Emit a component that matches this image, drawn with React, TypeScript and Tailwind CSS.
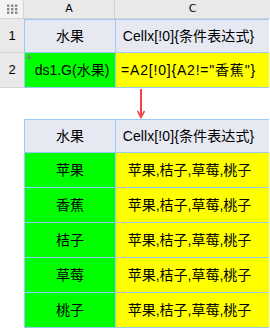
import React from "react"

const font = { fontFamily: '"Liberation Sans", "Noto Sans CJK SC", sans-serif' }
const wide = { fontFamily: '"DejaVu Sans", "Noto Sans CJK SC", sans-serif' }

const fruits = ["苹果", "香蕉", "桔子", "草莓", "桃子"]

const CornerDots = () => (
  <svg width="12" height="10" viewBox="0 0 12 10">
    {[0, 1, 2].map((r) =>
      [0, 1, 2].map((c) => (
        <rect key={`${r}-${c}`} x={c * 4 + 1} y={r * 3.5 + 0.5} width="2.4" height="2.4" fill="#8a8a8a" />
      ))
    )}
  </svg>
)

export default function App() {
  return (
    <div className="w-[270px] h-[328px] bg-white text-black overflow-hidden" style={font}>
      {/* Sheet */}
      <div className="grid grid-cols-[24px_246px]">
        {/* column headers */}
        <div className="h-[19px] bg-[#f4f4f6] border-r border-b border-[#d4d4d4] flex items-center justify-center">
          <CornerDots />
        </div>
        <div className="h-[19px] bg-[#e9e9e9] border-b border-[#d4d4d4] grid grid-cols-[91px_155px] text-[11px]" style={wide}>
          <div className="flex items-center justify-center border-r border-[#d0d0d0]">A</div>
          <div className="flex items-center justify-center">C</div>
        </div>

        {/* row numbers */}
        <div className="bg-[#e9e9e9] flex flex-col text-[13px]">
          <div className="h-[33px] mt-px flex items-center justify-center border-b border-[#d4d4d4]">1</div>
          <div className="h-[35px] flex items-center justify-center border-b border-[#d4d4d4]">2</div>
        </div>

        {/* cells */}
        <div className="w-[245px] bg-[#9ccaf6] p-px grid grid-cols-[90px_153px] grid-rows-[32px_34px] gap-px text-[14px]">
          <div className="bg-[#e6e9f2] flex items-center justify-center">水果</div>
          <div className="bg-[#e6e9f2] flex items-center justify-center whitespace-nowrap tracking-[0.1px] pr-[8px]">
            Cellx[!0]{"{"}条件表达式{"}"}
          </div>
          <div className="relative bg-[#00ff00] flex items-center justify-center pl-[4px]">
            <svg className="absolute left-[1px] top-[1px]" width="6" height="6" viewBox="0 0 6 6">
              <path d="M3 0V5M0.8 2.8L3 5L5.2 2.8" stroke="#8c6f8c" strokeWidth="1.2" fill="none" />
            </svg>
            ds1.G(水果)
          </div>
          <div className="bg-[#ffff00] flex items-center justify-center whitespace-nowrap tracking-[0.8px] pr-[8px]">
            =A2[!0]{"{"}A2!="香蕉"{"}"}
          </div>
        </div>
      </div>

      {/* arrow */}
      <div className="h-[31px] pl-[137px]">
        <svg width="8" height="31" viewBox="0 0 8 31">
          <line x1="4" y1="1" x2="4" y2="27" stroke="#ef4444" strokeWidth="2" />
          <path d="M0.5 23L4 29.5L7.5 23" stroke="#ef4444" strokeWidth="1.6" fill="none" />
        </svg>
      </div>

      {/* result table */}
      <div className="ml-[24px] w-[245px] bg-[#9ccaf6] p-px grid grid-cols-[90px_153px] gap-px text-[14px]">
        <div className="h-[32px] bg-[#e6e9f2] flex items-center justify-center">水果</div>
        <div className="h-[32px] bg-[#e6e9f2] flex items-center justify-center whitespace-nowrap tracking-[0.1px] pr-[8px]">
          Cellx[!0]{"{"}条件表达式{"}"}
        </div>
        {fruits.map((f) => (
          <React.Fragment key={f}>
            <div className="h-[34px] bg-[#00ff00] flex items-center justify-center">{f}</div>
            <div className="h-[34px] bg-[#ffff00] flex items-center justify-center whitespace-nowrap pr-[6px]">
              苹果,桔子,草莓,桃子
            </div>
          </React.Fragment>
        ))}
      </div>
    </div>
  )
}
